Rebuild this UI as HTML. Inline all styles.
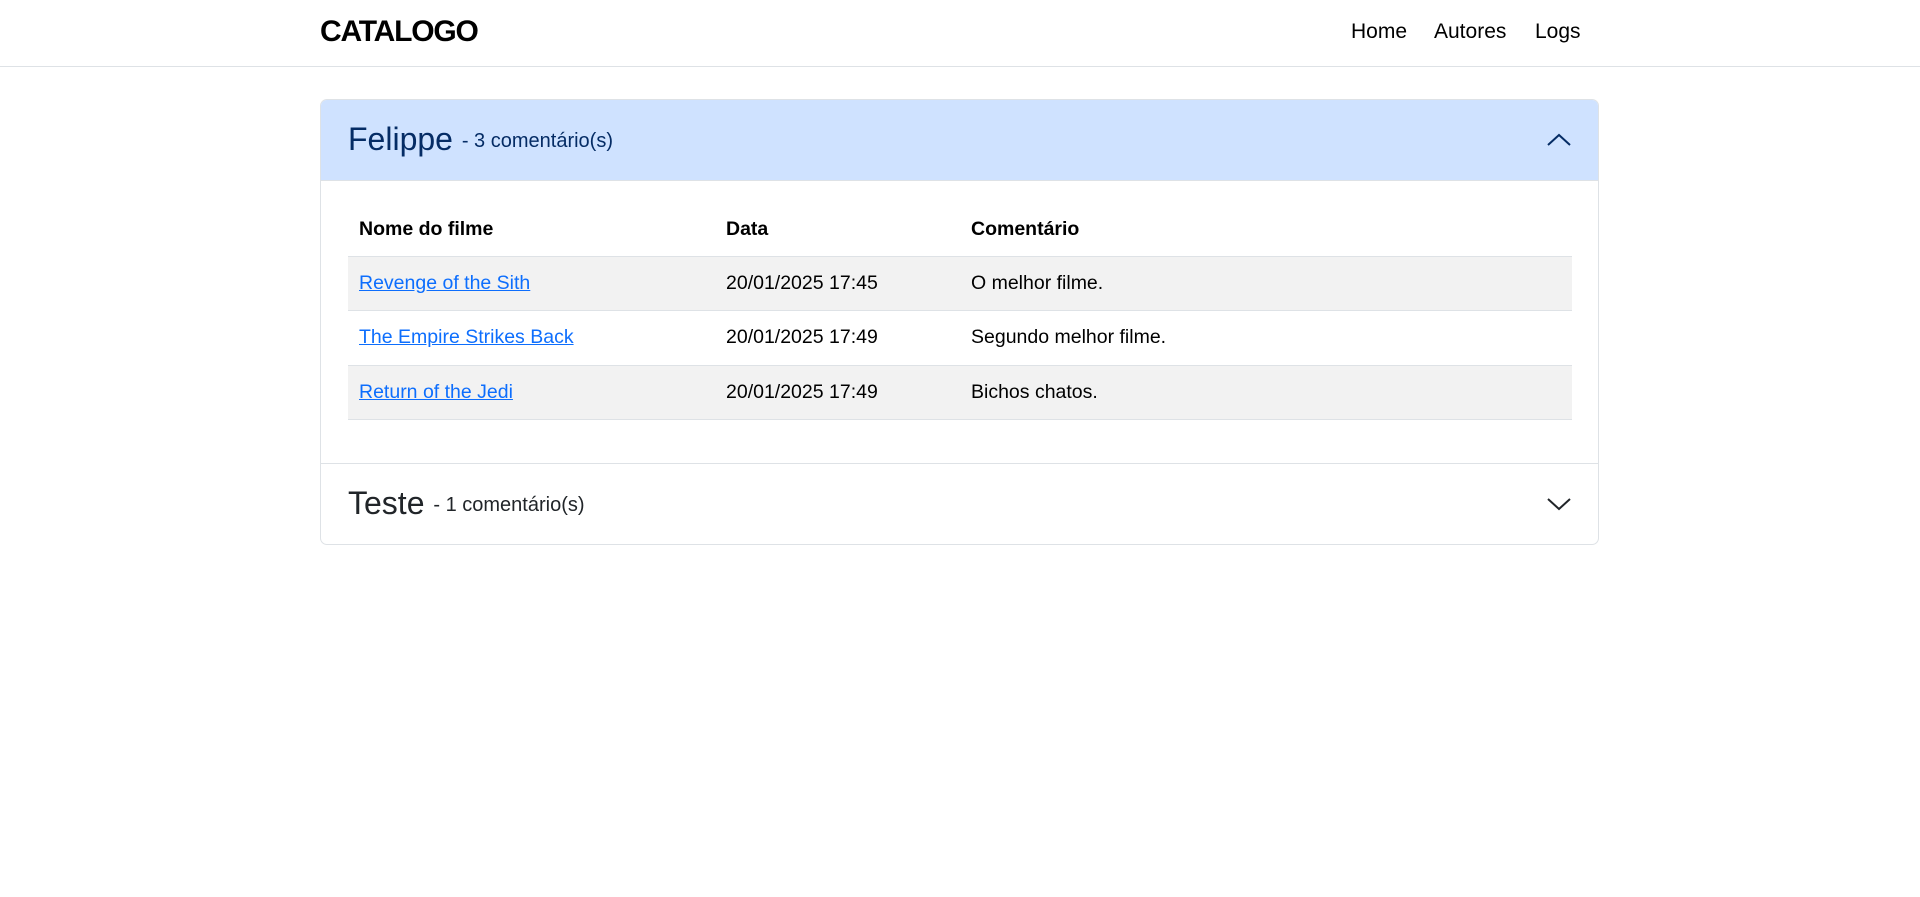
<!DOCTYPE html>
<html><head><meta charset="utf-8"><style>
*{box-sizing:border-box;margin:0;padding:0}
body{width:1920px;height:897px;background:#fff;font-family:"Liberation Sans",sans-serif;color:#000;position:relative;overflow:hidden}
.nav{position:absolute;left:0;top:0;width:1920px;height:67px;border-bottom:1px solid #dee2e6}
.brand{position:absolute;left:320px;top:15px;font-size:30px;font-weight:bold;letter-spacing:-1.2px}
.links{position:absolute;top:20px;font-size:21px}
.card{position:absolute;left:320px;top:99px;width:1279px;height:446px;border:1px solid #dee2e6;border-radius:7px;overflow:hidden}
.h1{position:absolute;left:0;top:0;width:100%;height:81px;background:#cfe2ff;color:#052c65;border-bottom:1px solid #dee2e6}
.h2{position:absolute;left:0;top:363px;width:100%;height:82px;border-top:1px solid #dee2e6;color:#212529}
.title{position:absolute;left:27px;top:21px;font-size:32px;white-space:nowrap}
.title span{font-size:20px;position:relative;top:-3px}
.chev{position:absolute;left:1226px;top:30px}
table{position:absolute;left:27px;top:104px;width:1224px;border-collapse:collapse;font-size:19.5px}
td,th{text-align:left;padding:0 11px;height:54.5px;border-bottom:1px solid #dee2e6}
th{font-weight:bold;height:52px}
tr.s td{background:#f2f2f2}
a{color:#0d6efd;text-decoration:underline}
</style></head><body>
<div class="nav">
<div class="brand">CATALOGO</div>
<div class="links" style="left:1351px">Home</div>
<div class="links" style="left:1434px">Autores</div>
<div class="links" style="left:1535px">Logs</div>
</div>
<div class="card">
<div class="h1"><div class="title">Felippe <span>- 3 comentário(s)</span></div>
<svg class="chev" width="24" height="20" viewBox="0 0 24 20"><path d="M1 15 L12 5 L23 15" fill="none" stroke="#052c65" stroke-width="2"/></svg></div>
<table>
<tr><th style="width:367px">Nome do filme</th><th style="width:245px">Data</th><th>Comentário</th></tr>
<tr class="s"><td><a>Revenge of the Sith</a></td><td>20/01/2025 17:45</td><td>O melhor filme.</td></tr>
<tr><td><a>The Empire Strikes Back</a></td><td>20/01/2025 17:49</td><td>Segundo melhor filme.</td></tr>
<tr class="s"><td><a>Return of the Jedi</a></td><td>20/01/2025 17:49</td><td>Bichos chatos.</td></tr>
</table>
<div class="h2"><div class="title">Teste <span>- 1 comentário(s)</span></div>
<svg class="chev" width="24" height="20" viewBox="0 0 24 20"><path d="M1 5 L12 15 L23 5" fill="none" stroke="#212529" stroke-width="2"/></svg></div>
</div>
</body></html>
